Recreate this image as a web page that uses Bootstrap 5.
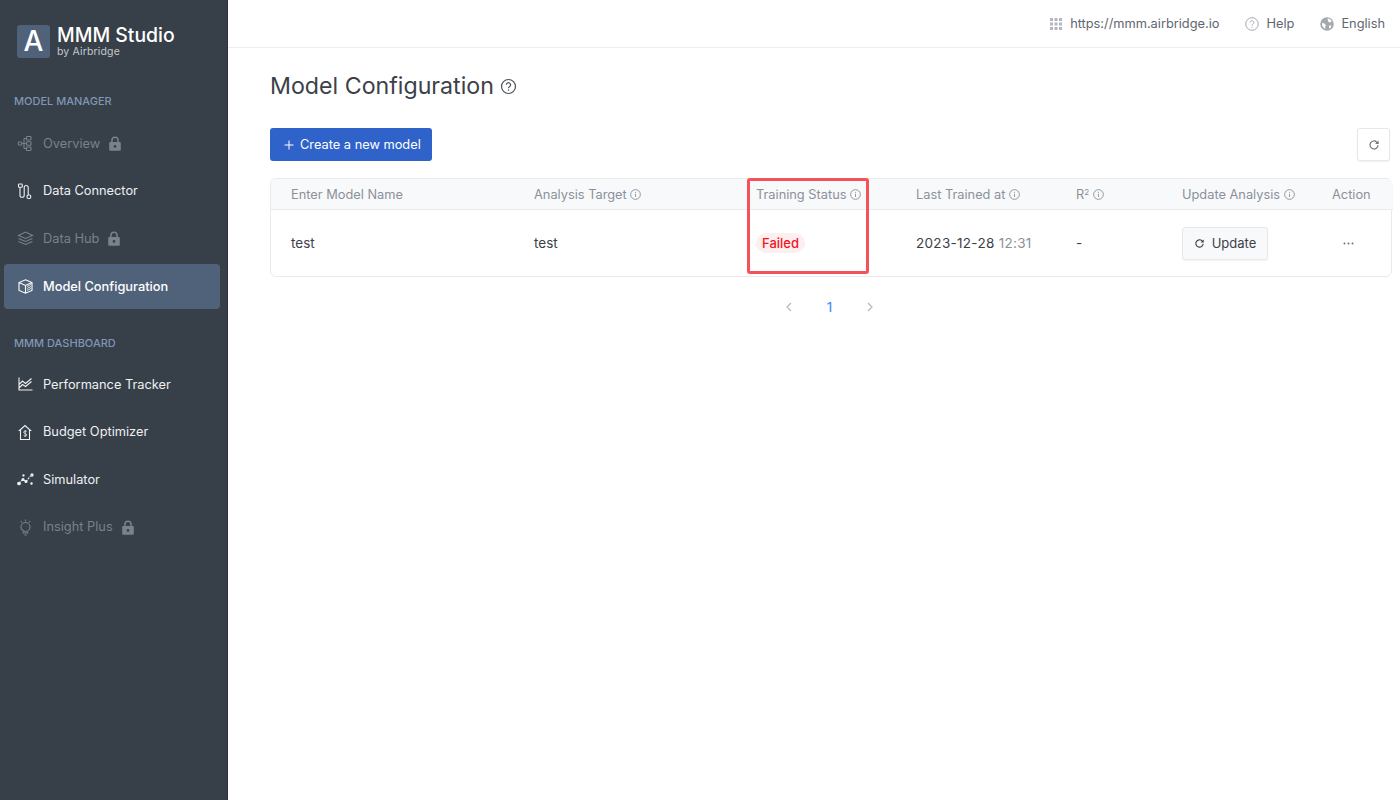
<!DOCTYPE html>
<html lang="en">
<head>
  <meta charset="UTF-8">
  <title>Model Configuration - MMM Studio</title>
  <link rel="stylesheet" href="https://cdn.jsdelivr.net/npm/bootstrap@5.3.0/dist/css/bootstrap.min.css">
  <style>
  html, body { height: 100%; }
  body { font-family: Inter, "Liberation Sans", sans-serif; font-size: 14px; color: #3c4149; background: #fff; overflow: hidden; }
  .app { height: 800px; }
  .sidebar { width: 228px; flex: 0 0 228px; background: #373f49; border-right: 1px solid #2b323a; padding: 25px 7px 0 4px; }
  .brand { padding-left: 13px; height: 33px; gap: 7px; margin-bottom: 36px; }
  .brand-mark { width: 33px; height: 33px; background: #50627a; border-radius: 3px; color: #fff; font-size: 28px; font-weight: 500; line-height: 33px; text-align: center; }
  .brand-name { color: #fff; font-size: 19.4px; font-weight: 500; line-height: 20px; margin-top: -1px; }
  .brand-sub { color: #c3c9d0; font-size: 10.5px; line-height: 11px; margin-top: 1px; letter-spacing: .15px; }
  .nav-label { color: #7f97b5; font-size: 11px; font-weight: 500; line-height: 14px; padding-left: 10px; margin-bottom: 13px; }
  .nav-label.second { margin-top: 25px; margin-bottom: 12px; }
  .side-item { height: 45px; margin-bottom: 2.5px; padding-left: 13px; gap: 9px; color: #eef0f2; border-radius: 4px; text-decoration: none; font-size: 12.8px; }
  .side-item svg.ico { width: 17px; height: 17px; flex: 0 0 17px; fill: none; stroke: currentColor; stroke-width: 1.1; }
  .side-item.locked { color: #7b8188; }
  .side-item.active { background: #50627a; color: #fff; font-weight: 500; padding-top: 1px; }
  .side-item.active:hover, .side-item:hover { color: inherit; }
  .lock { width: 12px; height: 15px; fill: currentColor; }
  .topbar { height: 48px; border-bottom: 1px solid #eceef2; padding-right: 15px; gap: 26px; color: #5f6670; font-size: 12.8px; }
  .topbar .gap-icon { gap: 7px; }
  .topbar svg { width: 14px; height: 14px; }
  .content { padding: 0 8px 0 42px; }
  h1.page-title { font-size: 23.2px; font-weight: 400; color: #3c4149; margin: 0; line-height: 30px; }
  .title-row { margin-top: 23px; gap: 6px; margin-bottom: 27px; }
  .btn-create { background: #2f63c9; border: 0; color: #fff; height: 33px; width: 162px; border-radius: 3px; font-size: 12.8px; padding: 0 0 0 14px; gap: 6px; }
  .btn-create:hover { background: #2f63c9; color: #fff; }
  .btn-refresh { width: 33px; height: 33px; background: #fff; border: 1px solid #e6e8ec; border-radius: 3px; padding: 0; margin-right: 2px; box-shadow: 0 1px 2px rgba(0,0,0,.06); }
  .grid-wrap { margin-top: 17px; border: 1px solid #e8eaed; border-radius: 6px; width: 1122px; }
  .model-table { table-layout: fixed; width: 100%; margin: 0; }
  .model-table th { background: #f8f9fb; color: #8b919a; font-weight: 400; font-size: 12.8px; height: 30px; padding: 1px 0 0 20px; border-bottom: 1px solid #e8eaed; vertical-align: middle; white-space: nowrap; }
  .model-table th:first-child { border-top-left-radius: 6px; }
  .model-table th:last-child { border-top-right-radius: 6px; }
  .model-table td { height: 67px; padding: 0 0 0 20px; border: 0; font-size: 13.5px; color: #3c4149; vertical-align: middle; white-space: nowrap; }
  .model-table sup { font-size: 8px; top: -.4em; }
  .col-a { width: 243px; } .col-b { width: 222px; } .col-c { width: 160px; } .col-d { width: 160px; }
  .col-e { width: 106px; } .col-f { width: 150px; } .col-g { width: 81px; }
  .info { width: 11px; height: 11px; vertical-align: -1px; fill: none; stroke: #8b919a; }
  .status-failed { background: #fdeff0; color: #f5141e; font-weight: 500; font-size: 13px; padding: 2px 6px; border-radius: 10px; line-height: 16px; }
  .trained { letter-spacing: .3px; }
  .time { color: #8b919a; }
  .btn-update { background: #f8f9fb; border: 1px solid #e6e8ec; border-radius: 3px; height: 33px; width: 86px; padding: 0; margin-top: 1px; font-size: 13px; color: #3c4149; gap: 7px; box-shadow: 0 1px 1px rgba(0,0,0,.05); }
  .action-dots { margin-left: 11px; }
  .highlight { left: 476px; top: -1px; width: 122px; height: 96px; border: 3px solid #f35358; border-radius: 3px; pointer-events: none; }
  .pager { margin-top: 20px; gap: 34px; color: #b5bac1; width: 1122px; padding-right: 3px; font-size: 13px; line-height: 20px; }
  .pager .current { color: #4a90e8; font-weight: 500; }
  </style>
</head>
<body>
  <svg class="d-none">
    <symbol id="i-lock" viewBox="0 0 12 15"><path fill-rule="evenodd" d="M2.2 6V4.2a3.8 3.8 0 0 1 7.6 0V6h.7c.8 0 1.3.5 1.3 1.3v6.2c0 .8-.5 1.3-1.3 1.3h-9C.7 14.8.2 14.3.2 13.500V7.300C.2 6.500.7 6 1.500 6zm1.500 0h4.600V4.200a2.300 2.300 0 0 0-4.600 0zM6 9a1.400 1.400 0 1 0 0 2.800A1.400 1.400 0 0 0 6 9z"/></symbol>
    <symbol id="i-info" viewBox="0 0 12 12"><circle cx="6" cy="6" r="5.300"/><path d="M6 5.300v3.400M6 3.200v1"/></symbol>
    <symbol id="i-refresh" viewBox="0 0 12 12"><path fill="none" stroke="currentColor" stroke-width="1.200" d="M10 6.200A4 4 0 1 1 8.800 3.100L10 4.300"/><path fill="currentColor" d="M10.600 1.500v3.400H7.200z"/></symbol>
  </svg>

  <div class="app d-flex">
    <aside class="sidebar d-flex flex-column">
      <div class="brand d-flex align-items-center">
        <div class="brand-mark">A</div>
        <div>
          <div class="brand-name">MMM Studio</div>
          <div class="brand-sub">by Airbridge</div>
        </div>
      </div>

      <div class="nav-label">MODEL MANAGER</div>
      <a class="side-item locked d-flex align-items-center" href="#">
        <svg class="ico" viewBox="0 0 17 17"><circle cx="3" cy="8.500" r="1.800"/><path d="M4.800 8.500h4M7 3.500v10M7 3.500h2.500M7 13.500h2.500"/><rect x="9.500" y="1.500" width="4.500" height="3.500" rx=".8"/><rect x="9.500" y="6.800" width="4.500" height="3.500" rx=".8"/><rect x="9.500" y="12" width="4.500" height="3.500" rx=".8"/></svg>
        <span>Overview</span>
        <svg class="lock"><use href="#i-lock"/></svg>
      </a>
      <a class="side-item d-flex align-items-center" href="#">
        <svg class="ico" viewBox="0 0 17 17"><rect x="1.500" y="1" width="3.800" height="3.300" rx=".8"/><path d="M3 4.300v7.900a2.100 2.100 0 0 0 4.200 0V4.500a2 2 0 0 1 4 0v7.500"/><rect x="10" y="12" width="3.800" height="3.500" rx="1.500"/></svg>
        <span>Data Connector</span>
      </a>
      <a class="side-item locked d-flex align-items-center" href="#">
        <svg class="ico" viewBox="0 0 17 17"><path d="M8.500 2 15.500 5.500 8.500 8.500 1.500 5.500zM1.500 8.500l7 3 7-3M1.500 11.500l7 3 7-3"/></svg>
        <span>Data Hub</span>
        <svg class="lock"><use href="#i-lock"/></svg>
      </a>
      <a class="side-item active d-flex align-items-center" href="#">
        <svg class="ico" viewBox="0 0 17 17"><path d="M8.500 1.800 15 4.500v8L8.500 15.200 2 12.500v-8zM2 4.500l6.500 3 6.500-3M8.500 7.500v7.700"/><path d="M10 8.500l4-2M10 10.500l4-2M10 12.500l4-2" stroke-width=".8"/></svg>
        <span>Model Configuration</span>
      </a>

      <div class="nav-label second">MMM DASHBOARD</div>
      <a class="side-item d-flex align-items-center" href="#">
        <svg class="ico" viewBox="0 0 17 17"><path d="M2 1.500v12.500h13.500M2 8.500l3.500-3.500 3 2.500 6-5M2 12l3.500-3.500 3 2 6-5"/></svg>
        <span>Performance Tracker</span>
      </a>
      <a class="side-item d-flex align-items-center" href="#">
        <svg class="ico" viewBox="0 0 17 17"><path d="M2.500 6.500 8 1.500l5.500 5h-1v9h-9v-9z"/><path d="M9.700 7.400C9.200 6.900 6.700 6.600 6.700 8.200c0 1.600 3 1 3 2.600 0 1.600-2.500 1.400-3 .9M8.200 6v7" stroke-width=".8"/></svg>
        <span>Budget Optimizer</span>
      </a>
      <a class="side-item d-flex align-items-center" href="#">
        <svg class="ico" viewBox="0 0 17 17"><path d="M2 12l4-3.500 3 2 4.500-5.500" stroke-dasharray="2 1"/><circle cx="2" cy="12.500" r="1.300" fill="currentColor"/><circle cx="6" cy="8.500" r="1" fill="currentColor"/><circle cx="9" cy="10.500" r="1" fill="currentColor"/><circle cx="15" cy="4" r="1.100" fill="currentColor"/><circle cx="14.500" cy="12.500" r=".7" fill="currentColor"/><circle cx="6.500" cy="4.500" r=".6" fill="currentColor"/></svg>
        <span>Simulator</span>
      </a>
      <a class="side-item locked d-flex align-items-center" href="#">
        <svg class="ico" viewBox="0 0 17 17"><circle cx="8.500" cy="8" r="4.500"/><path d="M6.300 12.500v1.500h4.400v-1.500M7.300 16h2.400M3.800 2l1 1.300M8.500 .5V2.300M13.200 2l-1 1.300"/></svg>
        <span>Insight Plus</span>
        <svg class="lock"><use href="#i-lock"/></svg>
      </a>
    </aside>

    <main class="flex-grow-1 d-flex flex-column">
      <header class="topbar d-flex align-items-center justify-content-end">
        <div class="d-flex align-items-center gap-icon">
          <svg viewBox="0 0 14 14" fill="#b4b8be"><rect x="1" y="1" width="3" height="3"/><rect x="5.500" y="1" width="3" height="3"/><rect x="10" y="1" width="3" height="3"/><rect x="1" y="5.500" width="3" height="3"/><rect x="5.500" y="5.500" width="3" height="3"/><rect x="10" y="5.500" width="3" height="3"/><rect x="1" y="10" width="3" height="3"/><rect x="5.500" y="10" width="3" height="3"/><rect x="10" y="10" width="3" height="3"/></svg>
          <span>https://mmm.airbridge.io</span>
        </div>
        <div class="d-flex align-items-center gap-icon">
          <svg viewBox="0 0 14 14" fill="none" stroke="#a4a9b0"><circle cx="7" cy="7" r="6.300"/><path d="M5.200 5.500a1.800 1.800 0 1 1 2.800 1.500c-.7.400-1 .8-1 1.500M7 9.800v1"/></svg>
          <span>Help</span>
        </div>
        <div class="d-flex align-items-center gap-icon">
          <svg viewBox="0 0 14 14"><circle cx="7" cy="7" r="6.800" fill="#a4a9b0"/><path fill="#fff" d="M7.500 1.500c2 .2 3.500 1.200 4.300 2.800L10 5.500 8.500 5 8 3.500zM2 6l2.500.5 1.500 2-1 1.500.5 2C3.200 11.200 1.800 8.800 2 6zM9 8.500h2.500L10.500 11 9 11.500z"/></svg>
          <span>English</span>
        </div>
      </header>

      <div class="content flex-grow-1">
        <div class="title-row d-flex align-items-center">
          <h1 class="page-title">Model Configuration</h1>
          <svg width="17" height="17" viewBox="0 0 17 17" fill="none" stroke="#4b5058" stroke-width="1.200"><circle cx="8.500" cy="8.500" r="7"/><path d="M6.400 6.800a2.100 2.100 0 1 1 3.300 1.700c-.8.500-1.200.9-1.200 1.700M8.500 11.500v1.200"/></svg>
        </div>

        <div class="d-flex justify-content-between align-items-center">
          <button class="btn btn-create d-flex align-items-center" type="button">
            <svg width="10" height="10" viewBox="0 0 10 10" stroke="#fff" fill="none"><path d="M5 .5v9M.5 5h9"/></svg>
            <span>Create a new model</span>
          </button>
          <button class="btn btn-refresh d-flex align-items-center justify-content-center text-secondary" type="button" aria-label="Refresh">
            <svg width="12" height="12"><use href="#i-refresh"/></svg>
          </button>
        </div>

        <div class="grid-wrap position-relative">
          <table class="table model-table">
            <colgroup>
              <col class="col-a"><col class="col-b"><col class="col-c"><col class="col-d"><col class="col-e"><col class="col-f"><col class="col-g">
            </colgroup>
            <thead>
              <tr>
                <th>Enter Model Name</th>
                <th>Analysis Target <svg class="info"><use href="#i-info"/></svg></th>
                <th>Training Status <svg class="info"><use href="#i-info"/></svg></th>
                <th>Last Trained at <svg class="info"><use href="#i-info"/></svg></th>
                <th>R<sup>2</sup> <svg class="info"><use href="#i-info"/></svg></th>
                <th>Update Analysis <svg class="info"><use href="#i-info"/></svg></th>
                <th>Action</th>
              </tr>
            </thead>
            <tbody>
              <tr>
                <td>test</td>
                <td>test</td>
                <td><span class="status-failed d-inline-block">Failed</span></td>
                <td class="trained">2023-12-28 <span class="time">12:31</span></td>
                <td>-</td>
                <td>
                  <button class="btn btn-update d-inline-flex align-items-center justify-content-center" type="button">
                    <svg width="11" height="11"><use href="#i-refresh"/></svg>
                    <span>Update</span>
                  </button>
                </td>
                <td>
                  <svg width="11" height="3" viewBox="0 0 11 3" fill="#6c727a" class="action-dots"><circle cx="1.500" cy="1.500" r="1"/><circle cx="5.500" cy="1.500" r="1"/><circle cx="9.500" cy="1.500" r="1"/></svg>
                </td>
              </tr>
            </tbody>
          </table>
          <div class="highlight position-absolute"></div>
        </div>

        <div class="pager d-flex justify-content-center align-items-center">
          <svg width="8" height="10" viewBox="0 0 8 10" fill="none" stroke="#b5bac1" stroke-width="1.200"><path d="M6 1 2 5l4 4"/></svg>
          <span class="current">1</span>
          <svg width="8" height="10" viewBox="0 0 8 10" fill="none" stroke="#b5bac1" stroke-width="1.200"><path d="m2 1 4 4-4 4"/></svg>
        </div>
      </div>
    </main>
  </div>
  <script src="https://cdn.jsdelivr.net/npm/bootstrap@5.3.0/dist/js/bootstrap.bundle.min.js"></script>
</body>
</html>
